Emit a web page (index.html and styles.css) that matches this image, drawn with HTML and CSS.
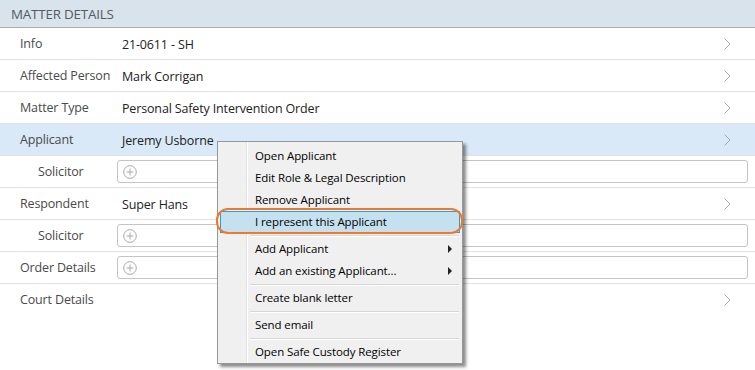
FILE: index.html
```html
<!DOCTYPE html>
<html>
<head>
<meta charset="utf-8">
<link rel="stylesheet" href="styles.css">
</head>
<body>
<div class="panel">
  <div class="header">MATTER DETAILS</div>
  <div class="row"><div class="label">Info</div><div class="value">21-0611 - SH</div><svg class="chev" viewBox="0 0 7 12"><polyline points="0.5,0.5 6,6 0.5,11.5"/></svg></div>
  <div class="row"><div class="label">Affected Person</div><div class="value">Mark Corrigan</div><svg class="chev" viewBox="0 0 7 12"><polyline points="0.5,0.5 6,6 0.5,11.5"/></svg></div>
  <div class="row"><div class="label">Matter Type</div><div class="value">Personal Safety Intervention Order</div><svg class="chev" viewBox="0 0 7 12"><polyline points="0.5,0.5 6,6 0.5,11.5"/></svg></div>
  <div class="row selected"><div class="label">Applicant</div><div class="value">Jeremy Usborne</div><svg class="chev" viewBox="0 0 7 12"><polyline points="0.5,0.5 6,6 0.5,11.5"/></svg></div>
  <div class="row"><div class="label sub">Solicitor</div><div class="field"><svg class="plus" viewBox="0 0 14 14"><circle cx="7" cy="7" r="6.3"/><line x1="7" y1="3.5" x2="7" y2="10.5"/><line x1="3.5" y1="7" x2="10.5" y2="7"/></svg></div></div>
  <div class="row"><div class="label">Respondent</div><div class="value">Super Hans</div><svg class="chev" viewBox="0 0 7 12"><polyline points="0.5,0.5 6,6 0.5,11.5"/></svg></div>
  <div class="row"><div class="label sub">Solicitor</div><div class="field"><svg class="plus" viewBox="0 0 14 14"><circle cx="7" cy="7" r="6.3"/><line x1="7" y1="3.5" x2="7" y2="10.5"/><line x1="3.5" y1="7" x2="10.5" y2="7"/></svg></div></div>
  <div class="row"><div class="label">Order Details</div><div class="field"><svg class="plus" viewBox="0 0 14 14"><circle cx="7" cy="7" r="6.3"/><line x1="7" y1="3.5" x2="7" y2="10.5"/><line x1="3.5" y1="7" x2="10.5" y2="7"/></svg></div></div>
  <div class="row last"><div class="label">Court Details</div><div class="value"></div><svg class="chev" viewBox="0 0 7 12"><polyline points="0.5,0.5 6,6 0.5,11.5"/></svg></div>
</div>

<div class="menu">
  <div class="gutter"></div>
  <div class="item">Open Applicant</div>
  <div class="item">Edit Role &amp; Legal Description</div>
  <div class="item">Remove Applicant</div>
  <div class="item hot">I represent this Applicant</div>
  <div class="sep"></div>
  <div class="item">Add Applicant<span class="arrow"></span></div>
  <div class="item">Add an existing Applicant...<span class="arrow"></span></div>
  <div class="sep"></div>
  <div class="item">Create blank letter</div>
  <div class="sep"></div>
  <div class="item">Send email</div>
  <div class="sep"></div>
  <div class="item">Open Safe Custody Register</div>
</div>
<div class="callout"></div>
</body>
</html>
```
FILE: styles.css
```css
html, body {
  margin: 0;
  padding: 0;
  background: #ffffff;
  width: 755px;
  height: 370px;
  overflow: hidden;
  font-family: "Open Sans", "Noto Sans", sans-serif;
}

.panel {
  display: flex;
  flex-direction: column;
}

.header {
  height: 27px;
  line-height: 28px;
  background: #d9e3ec;
  border-bottom: 1px solid #a9adb1;
  color: #555a5f;
  font-size: 13.4px;
  padding-left: 11px;
  letter-spacing: -0.2px;
}

.row {
  height: 31px;
  border-bottom: 1px solid #e3e3e3;
  display: flex;
  align-items: center;
  padding-right: 7px;
  font-size: 12.5px;
  letter-spacing: -0.15px;
}

.row.last {
  border-bottom: none;
}

.row.selected {
  background: #d9e9f7;
}

.label {
  width: 102px;
  padding-left: 20px;
  color: #4a4a4a;
  flex: none;
}

.label.sub {
  width: 84px;
  padding-left: 38px;
  text-align: left;
}

.value {
  flex: 1;
  color: #222222;
  padding-left: 0;
  padding-top: 1px;
}

.chev {
  width: 7px;
  height: 12px;
  margin-right: 17px;
  fill: none;
  stroke: #a8a8a8;
  stroke-width: 1;
}

.field {
  flex: 1;
  margin-left: -5px;
  height: 21px;
  border: 1px solid #c4c4c4;
  border-radius: 3px;
  display: flex;
  align-items: center;
  padding-left: 5px;
  background: #fff;
}

.plus {
  width: 14px;
  height: 14px;
  fill: none;
  stroke: #a9a9a9;
  stroke-width: 1;
}

.menu {
  position: absolute;
  left: 217px;
  top: 141px;
  width: 244px;
  padding: 3px 0 0 0;
  background: #f0f0f0;
  border: 1px solid #979797;
  box-shadow: 3px 3px 3px rgba(0, 0, 0, 0.45);
  font-size: 11.5px;
  color: #000;
  letter-spacing: -0.1px;
}

.gutter {
  position: absolute;
  left: 28px;
  top: 0;
  bottom: 0;
  width: 1px;
  background: #e2e3e3;
  border-right: 1px solid #ffffff;
}

.item {
  position: relative;
  height: 22px;
  line-height: 22px;
  padding-left: 35px;
  margin: 0 2px;
}

.item.hot {
  background: #c5e0ef;
  border: 1px solid #26a0da;
  height: 20px;
  line-height: 20px;
  padding-left: 34px;
}

.arrow {
  position: absolute;
  right: 8px;
  top: 7px;
  width: 0;
  height: 0;
  border-top: 4px solid transparent;
  border-bottom: 4px solid transparent;
  border-left: 4px solid #222;
}

.sep {
  height: 5px;
  margin-left: 32px;
  margin-right: 3px;
  display: flex;
  align-items: center;
}

.sep::before {
  content: "";
  flex: 1;
  height: 1px;
  background: #d7d7d7;
  border-bottom: 1px solid #ffffff;
}

.callout {
  position: absolute;
  left: 216px;
  top: 208px;
  width: 243px;
  height: 22px;
  border: 2px solid #f0782a;
  border-radius: 12px;
}
```
